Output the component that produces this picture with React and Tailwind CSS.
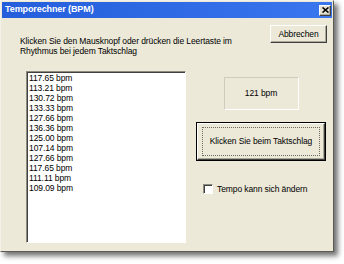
import React from "react";

const tempos = [
  "117.65", "113.21", "130.72", "133.33", "127.66", "136.36", "125.00",
  "107.14", "127.66", "117.65", "111.11", "109.09",
];

const raised =
  "border border-t-white border-l-white border-r-[#404040] border-b-[#404040] shadow-[inset_-1px_-1px_0_#aca899]";

export default function App() {
  return (
    <div
      className="w-[344px] h-[264px] bg-white"
      style={{ fontFamily: '"Liberation Sans", Arial, sans-serif' }}
    >
      {/* Dialog window */}
      <div className="w-[334px] h-[252px] flex flex-col bg-[#ece9d8] border border-t-[#f4f2e8] border-l-[#f4f2e8] border-r-[#5b5a52] border-b-[#5b5a52] p-px shadow-[4px_4px_5px_rgba(0,0,0,0.55)]">
        {/* Title bar */}
        <div className="h-[16px] flex items-center justify-between pl-[3px] pr-[1px] bg-gradient-to-r from-[#245edb] to-[#3a76ee]">
          <span className="text-white font-bold text-[9px] tracking-[-0.1px]">
            Temporechner (BPM)
          </span>
          <div className={`w-[12px] h-[11px] bg-[#e4e1d4] flex items-center justify-center ${raised}`}>
            <svg width="7" height="6" viewBox="0 0 7 6">
              <path d="M0.5 0.5 L6.5 5.5 M6.5 0.5 L0.5 5.5" stroke="#000" strokeWidth="1.6" />
            </svg>
          </div>
        </div>

        {/* Body */}
        <div className="flex-1 flex flex-col text-[8.5px] tracking-[-0.1px] text-black">
          <div className="flex justify-between">
            <p className="mt-[18px] ml-[18px] leading-[10px]">
              Klicken Sie den Mausknopf oder drücken die Leertaste im
              <br />
              Rhythmus bei jedem Taktschlag
            </p>
            <button className={`mt-[7px] mr-[5px] w-[57px] h-[18px] bg-[#ece9d8] ${raised}`}>
              Abbrechen
            </button>
          </div>

          <div className="flex mt-[15px]">
            {/* List */}
            <div className="ml-[24px] w-[160px] h-[172px] bg-white border border-t-[#8d8b80] border-l-[#8d8b80] border-r-white border-b-white shadow-[inset_1px_1px_0_#404040] pl-[2px] pt-[1px]">
              {tempos.map((t, i) => (
                <div key={i} className="leading-[10px] h-[10px]">
                  {t} bpm
                </div>
              ))}
            </div>

            {/* Right column */}
            <div className="ml-[10px] w-[130px] flex flex-col items-center">
              <div className="mt-[6px] w-[75px] h-[33px] flex items-center justify-center border border-t-[#cfccbd] border-l-[#cfccbd] border-r-white border-b-white">
                121 bpm
              </div>
              <button className="mt-[12px] w-[130px] h-[39px] border border-black bg-[#ece9d8] p-0">
                <div className={`w-full h-full flex items-center justify-center ${raised}`}>
                  <div className="w-[118px] h-[29px] flex items-center justify-center border border-dotted border-[#6b6a63]">
                    Klicken Sie beim Taktschlag
                  </div>
                </div>
              </button>
              <label className="mt-[22px] self-start ml-[7px] flex items-center gap-[4px]">
                <span className="w-[10px] h-[10px] bg-white border border-t-[#8d8b80] border-l-[#8d8b80] border-r-white border-b-white shadow-[inset_1px_1px_0_#404040]" />
                <span>Tempo kann sich ändern</span>
              </label>
            </div>
          </div>
        </div>
      </div>
    </div>
  );
}
